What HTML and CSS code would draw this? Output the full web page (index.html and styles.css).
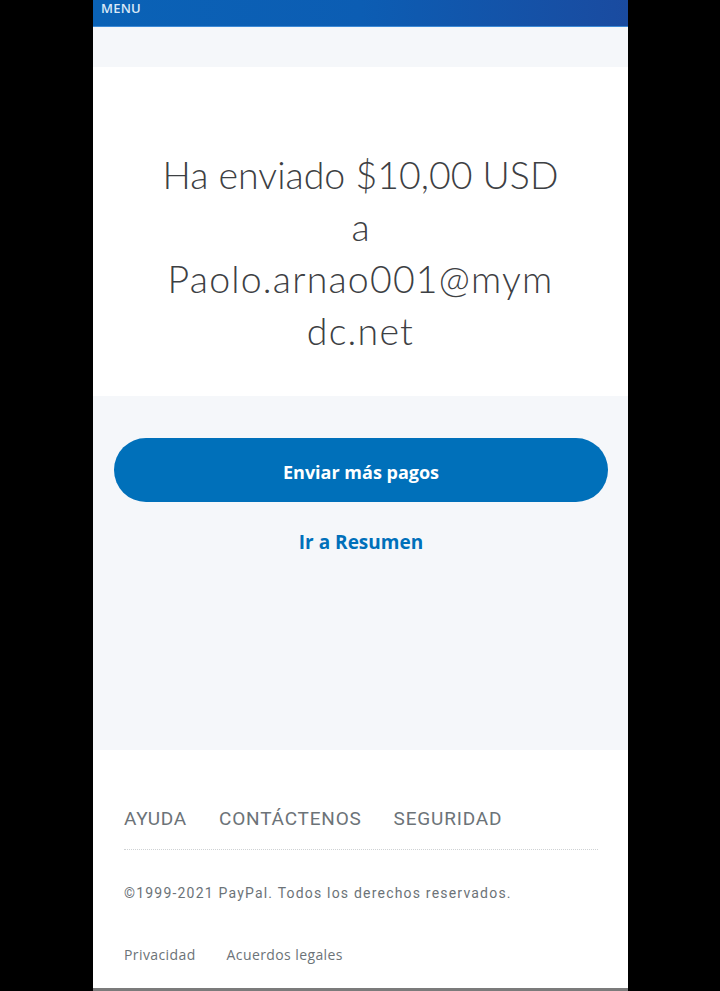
FILE: index.html
```html
<!DOCTYPE html>
<html lang="es">
<head>
<meta charset="utf-8">
<title>PayPal - Pago enviado</title>
<link rel="stylesheet" href="styles.css">
</head>
<body>
<div class="page">
  <header class="topbar"><span class="menu">MENU</span></header>
  <div class="band"></div>
  <section class="hero">
    <h1 class="headline">Ha enviado $10,00 USD<br>a<br><span class="email">Paolo.arnao001@mym<br>dc.net</span></h1>
  </section>
  <section class="actions">
    <a class="btn-primary" href="#">Enviar más pagos</a>
    <a class="link" href="#">Ir a Resumen</a>
  </section>
  <footer class="footer">
    <nav class="footer-nav">
      <a href="#">AYUDA</a>
      <a href="#">CONTÁCTENOS</a>
      <a href="#">SEGURIDAD</a>
    </nav>
    <div class="divider"></div>
    <p class="copyright">©1999-2021 PayPal. Todos los derechos reservados.</p>
    <nav class="legal">
      <a href="#">Privacidad</a>
      <a href="#">Acuerdos legales</a>
    </nav>
  </footer>
</div>
</body>
</html>
```
FILE: styles.css
```css
html, body {
  margin: 0;
  padding: 0;
  background: #000;
}
body {
  height: 991px;
  overflow: hidden;
}
.page {
  width: 535px;
  margin: 0 auto;
  display: flex;
  flex-direction: column;
  position: relative;
  left: 0.5px;
}
a { text-decoration: none; }

.topbar {
  height: 26px;
  border-bottom: 1px solid #3d8ad6;
  background: linear-gradient(90deg, #0a62b6 0%, #0c5db3 50%, #1a4ba0 100%);
  box-sizing: content-box;
}
.menu {
  display: block;
  padding-left: 8px;
  font-family: "Open Sans", sans-serif;
  font-weight: 600;
  font-size: 13px;
  line-height: 16px;
  color: #d9e8f7;
  letter-spacing: 0.2px;
}
.band {
  height: 40px;
  background: #f5f7fa;
}
.hero {
  background: #fff;
  height: 329px;
  box-sizing: border-box;
  padding-top: 82px;
}
.headline {
  margin: 0;
  text-align: center;
  font-family: "Lato", sans-serif;
  font-weight: 300;
  font-size: 37.5px;
  line-height: 52px;
  color: #3d4043;
}
.email {
  letter-spacing: 1.2px;
}
.actions {
  background: #f5f7fa;
  height: 354px;
  box-sizing: border-box;
  padding: 42px 20px 0 21px;
  display: flex;
  flex-direction: column;
  align-items: stretch;
}
.btn-primary {
  height: 64px;
  box-sizing: border-box;
  padding-top: 3px;
  border-radius: 32px;
  background: #0070ba;
  color: #fff;
  display: flex;
  align-items: center;
  justify-content: center;
  font-family: "Open Sans", sans-serif;
  font-weight: 700;
  font-size: 18px;
}
.link {
  margin-top: 28px;
  text-align: center;
  font-family: "Open Sans", sans-serif;
  font-weight: 700;
  font-size: 19px;
  line-height: 24px;
  color: #0070ba;
}
.footer {
  background: #fff;
  height: 241px;
  box-sizing: border-box;
  border-bottom: 3px solid #7b7b7b;
  padding: 57px 30px 0 31px;
}
.footer-nav {
  display: flex;
  gap: 32px;
}
.footer-nav a {
  font-family: "Roboto", sans-serif;
  font-size: 19px;
  line-height: 24px;
  color: #6c7378;
  letter-spacing: 0.8px;
}
.divider {
  margin-top: 18px;
  border-top: 1px dotted #cfd2d4;
}
.copyright {
  margin: 33px 0 0;
  font-family: "Roboto", sans-serif;
  font-size: 14px;
  line-height: 20px;
  letter-spacing: 1.2px;
  color: #6c7378;
}
.legal {
  margin-top: 42px;
  display: flex;
  gap: 31px;
}
.legal a {
  font-family: "Open Sans", sans-serif;
  font-size: 14px;
  line-height: 20px;
  letter-spacing: 0.4px;
  color: #6c7378;
}
```
